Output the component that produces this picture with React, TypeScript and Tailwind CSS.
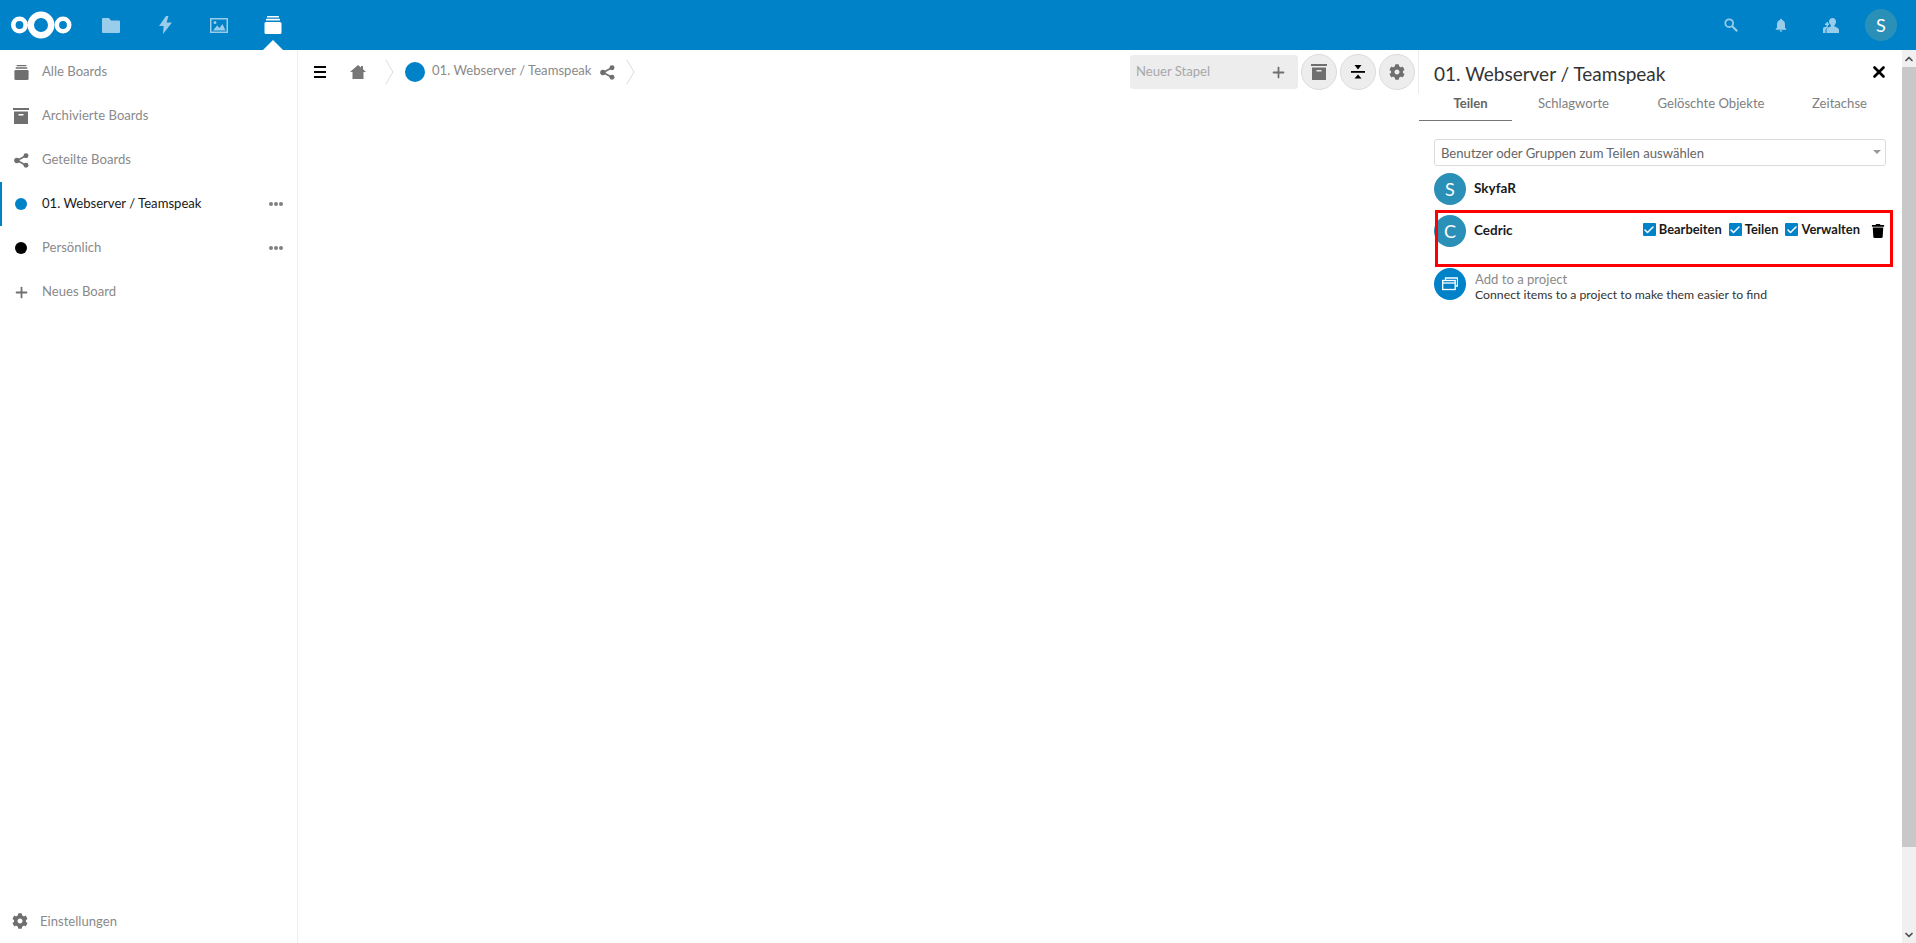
import { Plus, X, ChevronDown, ChevronUp, Check } from "lucide-react";
import { FaCog, FaTrash } from "react-icons/fa";
import { MdNotifications } from "react-icons/md";

// ─── Icons ────────────────────────────────────────────────────────────────────

function Logo() {
  return (
    <svg width="62" height="32" viewBox="0 0 62 32" fill="none" stroke="white">
      <circle cx="9.500" cy="16" r="6.200" strokeWidth="4.600" />
      <circle cx="31" cy="16" r="10.200" strokeWidth="6.400" />
      <circle cx="53" cy="16" r="6.200" strokeWidth="4.600" />
    </svg>
  );
}

function FolderIcon() {
  return (
    <svg width="18" height="15" viewBox="0 0 18 15" fill="currentColor">
      <path d="M1 0h6l2 2.500h8a1 1 0 0 1 1 1V14a1 1 0 0 1-1 1H1a1 1 0 0 1-1-1V1a1 1 0 0 1 1-1z" />
    </svg>
  );
}

function BoltIcon() {
  return (
    <svg width="13" height="18" viewBox="0 0 13 18" fill="currentColor">
      <path d="M7 0L0 10h4.600L4 18l9-11.500H7.600L9.500 0z" />
    </svg>
  );
}

function ImageIcon() {
  return (
    <svg width="18" height="15" viewBox="0 0 18 15" fill="currentColor">
      <path
        fillRule="evenodd"
        d="M0 0h18v15H0zM1.500 1.500v12h15v-12zM3 12.500l4-5 2.500 2.500 3-4 3 6.500zM5 3a1.500 1.500 0 1 1 0 3 1.500 1.500 0 0 1 0-3z"
      />
    </svg>
  );
}

function DeckIcon({ size = 18 }: { size?: number }) {
  return (
    <svg width={size} height={size} viewBox="0 0 18 18" fill="currentColor">
      <rect x="3" y="0" width="12" height="1.500" rx="0.500" />
      <rect x="2" y="2.800" width="14" height="1.800" rx="0.500" />
      <rect x="0.500" y="6" width="17" height="12" rx="1.500" />
    </svg>
  );
}

function ArchiveIcon({ size = 16 }: { size?: number }) {
  return (
    <svg width={size} height={size} viewBox="0 0 16 16" fill="currentColor">
      <path fillRule="evenodd" d="M0 0h16v2H0zM1 3.500h14V16H1zM5.500 6v1.500h5V6z" />
    </svg>
  );
}

function ShareIcon({ size = 15 }: { size?: number }) {
  return (
    <svg width={size} height={size} viewBox="0 0 14 14" fill="currentColor" stroke="currentColor">
      <circle cx="11.200" cy="2.500" r="2.300" stroke="none" />
      <circle cx="2.700" cy="7" r="2.500" stroke="none" />
      <circle cx="11.200" cy="11.500" r="2.300" stroke="none" />
      <path d="M11 2.500L3 7l8 4.500" fill="none" strokeWidth="1.500" />
    </svg>
  );
}

function HomeIcon() {
  return (
    <svg width="16" height="14" viewBox="0 0 16 14" fill="currentColor">
      <path d="M8 0L0 7h2.500v7h11V7H16l-3-2.700V1h-2v1.600z" />
    </svg>
  );
}

function SearchIcon() {
  return (
    <svg width="14" height="14" viewBox="0 0 14 14" fill="none" stroke="currentColor">
      <circle cx="5.200" cy="5.200" r="3.900" strokeWidth="1.800" />
      <path d="M8 8l5.200 5.200" strokeWidth="2" />
    </svg>
  );
}

function ContactsIcon() {
  return (
    <svg width="16" height="15" viewBox="0 0 16 15" fill="currentColor">
      <path d="M9.500 0C11.500 0 13 1.600 13 3.800c0 1.500-.7 2.800-1.600 3.500v1.300c2 .5 4.600 1.500 4.600 3.400v3H3.500v-3c0-1.900 2.600-2.900 4.400-3.400V7.300C7 6.600 6 5.300 6 3.800 6 1.600 7.500 0 9.500 0z" />
      <path d="M2 5.500h1.500V4H5v1.500h1V7H5v1.500H3.500V7H2zM0 10.500C0 9.500 1.500 9 3.500 8.500l2 1C3.500 10.300 2.500 11 2.500 12.500V15H0z" />
    </svg>
  );
}

function CollapseIcon() {
  return (
    <svg width="14" height="14" viewBox="0 0 14 14" fill="black">
      <rect x="0" y="6" width="14" height="1.800" />
      <path d="M3.500 0h7L7 4.500zM3.500 13.500h7L7 9.500z" />
    </svg>
  );
}

function ProjectIcon() {
  return (
    <svg width="16" height="14" viewBox="0 0 16 14" fill="none" stroke="white" strokeWidth="1.300">
      <path d="M3.500 3V1h12v8h-2" />
      <rect x="0.700" y="3.500" width="12.500" height="9" />
      <path d="M0.700 6h12.500" />
    </svg>
  );
}

function Crumb() {
  return (
    <svg width="9" height="26" viewBox="0 0 9 26" fill="none" stroke="#dddddd">
      <path d="M0.500 0.500L8 13L0.500 25.500" />
    </svg>
  );
}

// ─── Sidebar ──────────────────────────────────────────────────────────────────

function NavRow({
  icon,
  label,
  active,
  menu,
}: {
  icon: React.ReactNode;
  label: string;
  active?: boolean;
  menu?: boolean;
}) {
  return (
    <div
      className={`flex h-[44px] items-center border-l-2 ${
        active ? "border-[#0082c9] text-[#1a1a1a]" : "border-transparent text-[#8a8a8a]"
      }`}
    >
      <div className="mr-[2px] flex w-[38px] shrink-0 justify-center text-[#6f6f6f]">{icon}</div>
      <span className="flex-1 text-[13.100px]">{label}</span>
      {menu && (
        <div className="mr-[14px] flex gap-[1px]">
          <span className="h-[4px] w-[4px] rounded-full bg-[#808080]" />
          <span className="h-[4px] w-[4px] rounded-full bg-[#808080]" />
          <span className="h-[4px] w-[4px] rounded-full bg-[#808080]" />
        </div>
      )}
    </div>
  );
}

function Sidebar() {
  return (
    <aside className="flex w-[298px] shrink-0 flex-col border-r border-[#ededed]">
      <NavRow icon={<DeckIcon size={15} />} label="Alle Boards" />
      <NavRow icon={<ArchiveIcon />} label="Archivierte Boards" />
      <NavRow icon={<ShareIcon />} label="Geteilte Boards" />
      <NavRow
        active
        icon={<span className="h-[12px] w-[12px] rounded-full bg-[#0082c9]" />}
        label="01. Webserver / Teamspeak"
        menu
      />
      <NavRow
        icon={<span className="h-[12px] w-[12px] rounded-full bg-black" />}
        label="Persönlich"
        menu
      />
      <NavRow icon={<Plus size={17} strokeWidth={2.500} />} label="Neues Board" />
      <div className="mt-auto flex h-[44px] items-center text-[#8a8a8a]">
        <div className="flex w-[40px] justify-center text-[#6f6f6f]">
          <FaCog size={16} />
        </div>
        <span className="pt-[2px] text-[13.100px]">Einstellungen</span>
      </div>
    </aside>
  );
}

// ─── Board toolbar ────────────────────────────────────────────────────────────

function RoundButton({ children }: { children: React.ReactNode }) {
  return (
    <div className="flex h-[36px] w-[36px] items-center justify-center rounded-full border border-[#dbdbdb] bg-[#ededed] text-[#6f6f6f]">
      {children}
    </div>
  );
}

function Board() {
  return (
    <main className="flex h-[44px] w-[1121px] shrink-0 items-center border-r border-[#ededed] pr-[3px]">
      <div className="ml-[16px] flex w-[12px] flex-col gap-[3px]">
        <span className="h-[2px] bg-black" />
        <span className="h-[2px] bg-black" />
        <span className="h-[2px] bg-black" />
      </div>
      <div className="ml-[24px] text-[#777777]">
        <HomeIcon />
      </div>
      <div className="ml-[19px]">
        <Crumb />
      </div>
      <span className="ml-[11px] h-[20px] w-[20px] rounded-full bg-[#0082c9]" />
      <span className="ml-[7px] pb-[2px] text-[13.100px] text-[#8a8a8a]">01. Webserver / Teamspeak</span>
      <div className="ml-[9px] text-[#6f6f6f]">
        <ShareIcon />
      </div>
      <div className="ml-[11px]">
        <Crumb />
      </div>
      <div className="ml-auto flex items-center gap-[3px]">
        <div className="flex h-[34px] w-[168px] items-center justify-between rounded-[3px] bg-[#ededed] pl-[6px] pr-[11px]">
          <span className="pb-[1px] text-[13.100px] text-[#a8a8a8]">Neuer Stapel</span>
          <Plus size={17} strokeWidth={2.500} className="text-[#6f6f6f]" />
        </div>
        <RoundButton>
          <ArchiveIcon />
        </RoundButton>
        <RoundButton>
          <CollapseIcon />
        </RoundButton>
        <RoundButton>
          <FaCog size={16} />
        </RoundButton>
      </div>
    </main>
  );
}

// ─── Details panel ────────────────────────────────────────────────────────────

function Permission({ label }: { label: string }) {
  return (
    <div className="flex items-center gap-[3px]">
      <span className="flex h-[13px] w-[13px] items-center justify-center rounded-[1px] bg-[#0082c9]">
        <Check size={12} strokeWidth={3} className="text-white" />
      </span>
      <span className="text-[12.900px] font-bold">{label}</span>
    </div>
  );
}

function Avatar({ letter }: { letter: string }) {
  return (
    <div className="flex h-[32px] w-[32px] shrink-0 items-center justify-center rounded-full bg-[#2b90b8] text-[18px] text-white">
      {letter}
    </div>
  );
}

function Details() {
  return (
    <section className="relative flex-1 text-[#1a1a1a]">
      <div className="flex h-[44px] items-center justify-between pl-[15px] pr-[14px]">
        <span className="pt-[4px] text-[19px] text-[#333333]">01. Webserver / Teamspeak</span>
        <X size={18} strokeWidth={3.500} className="text-black" />
      </div>
      <div className="flex h-[26px] items-start text-[13.100px] text-[#808080]">
        <div className="h-[27px] w-[93px] border-b border-[#767676] pl-[10px] text-center font-bold text-[#666666]">
          Teilen
        </div>
        <div className="w-[123px] text-center">Schlagworte</div>
        <div className="w-[152px] text-center">Gelöschte Objekte</div>
        <div className="w-[105px] text-center">Zeitachse</div>
      </div>
      <div className="ml-[15px] mr-[16px] mt-[19px] flex h-[27px] items-center justify-between rounded-[3px] border border-[#dbdbdb] pl-[6px] pr-[4px]">
        <span className="pt-[2px] text-[13.100px] text-[#666666]">Benutzer oder Gruppen zum Teilen auswählen</span>
        <span className="mb-[2px] h-0 w-0 border-x-[4px] border-t-[4px] border-x-transparent border-t-[#999999]" />
      </div>
      <div className="ml-[15px] mt-[7px] flex h-[32px] items-start gap-[8px]">
        <Avatar letter="S" />
        <span className="mt-[5px] text-[13.500px] font-bold">SkyfaR</span>
      </div>
      <div className="ml-[15px] mr-[17px] mt-[10px] flex h-[50px] items-start">
        <Avatar letter="C" />
        <span className="ml-[8px] mt-[5px] text-[13.500px] font-bold">Cedric</span>
        <div className="ml-auto mt-[5px] flex items-center">
          <div className="flex items-center gap-[7px]">
            <Permission label="Bearbeiten" />
            <Permission label="Teilen" />
            <Permission label="Verwalten" />
          </div>
          <FaTrash size={14} className="ml-[11px] mt-[3px] text-black" />
        </div>
      </div>
      <div className="ml-[15px] mt-[3px] flex h-[32px] items-center gap-[9px]">
        <div className="flex h-[32px] w-[32px] items-center justify-center rounded-full bg-[#0082c9]">
          <ProjectIcon />
        </div>
        <div className="flex flex-col pt-[4px]">
          <span className="text-[13.100px] leading-[16px] text-[#8a8a8a]">Add to a project</span>
          <span className="text-[12.250px] leading-[15px] text-[#333333]">
            Connect items to a project to make them easier to find
          </span>
        </div>
      </div>

      {/* Red annotation drawn over the screenshot */}
      <div className="absolute left-[16px] top-[160px] h-[57px] w-[458px] border-[3px] border-[#ff0000]" />
    </section>
  );
}

function Scrollbar() {
  return (
    <div className="flex w-[14px] shrink-0 flex-col bg-[#f0f0f0] text-[#505050]">
      <div className="flex h-[17px] items-center justify-center">
        <ChevronUp size={12} strokeWidth={3.500} />
      </div>
      <div className="h-[780px] bg-[#c8c8c8]" />
      <div className="mt-auto flex h-[17px] items-center justify-center">
        <ChevronDown size={12} strokeWidth={3.500} />
      </div>
    </div>
  );
}

// ─── Page ─────────────────────────────────────────────────────────────────────

export default function App() {
  return (
    <div className="flex h-screen flex-col overflow-hidden bg-white font-['Lato','Open_Sans',sans-serif]">
      <header className="relative flex h-[50px] shrink-0 items-center bg-[#0082c9] text-white">
        <div className="flex w-[84px] justify-center pr-[2px]">
          <Logo />
        </div>
        <div className="flex w-[54px] justify-center opacity-60">
          <FolderIcon />
        </div>
        <div className="flex w-[54px] justify-center opacity-60">
          <BoltIcon />
        </div>
        <div className="flex w-[54px] justify-center opacity-60">
          <ImageIcon />
        </div>
        <div className="flex w-[54px] justify-center">
          <DeckIcon />
        </div>
        <span className="absolute left-[263px] top-[40px] h-0 w-0 border-x-[10px] border-b-[10px] border-x-transparent border-b-white" />
        <div className="ml-auto flex items-center pr-[10px]">
          <div className="flex w-[50px] justify-center opacity-60">
            <SearchIcon />
          </div>
          <div className="flex w-[50px] justify-center opacity-60">
            <MdNotifications size={16} />
          </div>
          <div className="flex w-[50px] justify-center opacity-60">
            <ContactsIcon />
          </div>
          <div className="flex w-[50px] justify-center">
            <div className="flex h-[32px] w-[32px] items-center justify-center rounded-full bg-[#2b90b8] text-[18px]">
              S
            </div>
          </div>
        </div>
      </header>
      <div className="flex min-h-0 flex-1">
        <Sidebar />
        <Board />
        <Details />
        <Scrollbar />
      </div>
    </div>
  );
}
